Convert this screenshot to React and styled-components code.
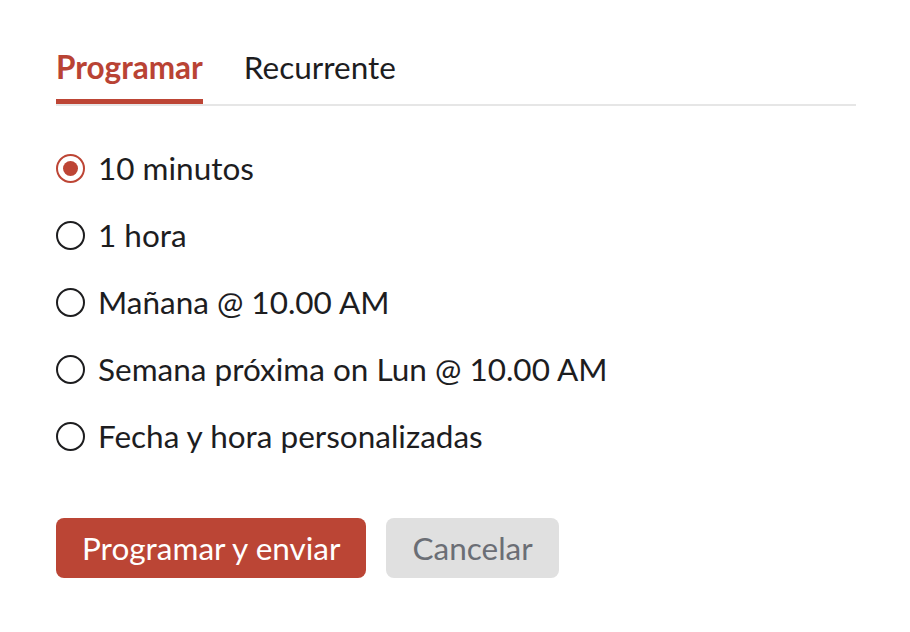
import React, { useState } from 'react';
import styled, { createGlobalStyle } from 'styled-components';

const GlobalStyle = createGlobalStyle`
  html, body {
    margin: 0;
    padding: 0;
    background: #fff;
    font-family: Lato, "Open Sans", sans-serif;
    color: #1d1d1f;
  }
`;

const Panel = styled.div`
  width: 800px;
  padding: 44px 54px 0 56px;
`;

const Tabs = styled.div`
  display: flex;
  gap: 41px;
  border-bottom: 2px solid #e6e6e6;
`;

const Tab = styled.button`
  position: relative;
  background: none;
  border: none;
  padding: 6px 0 20px;
  font-family: inherit;
  font-size: 31.5px;
  line-height: 34px;
  font-weight: ${p => (p.$active ? 700 : 400)};
  color: ${p => (p.$active ? '#b94334' : '#1d1d1f')};
  cursor: pointer;

  &::after {
    content: '';
    display: ${p => (p.$active ? 'block' : 'none')};
    position: absolute;
    left: 0;
    right: 0;
    bottom: 0;
    height: 5px;
    background: #bd4535;
  }
`;

const Options = styled.div`
  display: flex;
  flex-direction: column;
  gap: 33px;
  padding-top: 45px;
`;

const Option = styled.label`
  display: flex;
  align-items: center;
  gap: 13px;
  font-size: 31.5px;
  line-height: 34px;
  cursor: pointer;
`;

const Dot = styled.span`
  box-sizing: border-box;
  width: 29px;
  height: 29px;
  border-radius: 50%;
  border: 2px solid ${p => (p.$on ? '#bd4535' : '#1d1d1f')};
  display: flex;
  align-items: center;
  justify-content: center;

  &::after {
    content: '';
    display: ${p => (p.$on ? 'block' : 'none')};
    width: 15px;
    height: 15px;
    border-radius: 50%;
    background: #bd4535;
  }
`;

const Actions = styled.div`
  display: flex;
  gap: 20px;
  padding-top: 65px;
`;

const Button = styled.button`
  height: 60px;
  padding: 0 26px;
  border: none;
  border-radius: 8px;
  font-family: inherit;
  font-size: 31.5px;
  background: ${p => (p.$primary ? '#bb4535' : '#e0e0e0')};
  color: ${p => (p.$primary ? '#fff' : '#6b6e75')};
  cursor: pointer;
`;

const options = [
  '10 minutos',
  '1 hora',
  'Mañana @ 10.00 AM',
  'Semana próxima on Lun @ 10.00 AM',
  'Fecha y hora personalizadas',
];

export default function App() {
  const [tab, setTab] = useState(0);
  const [sel, setSel] = useState(0);
  return (
    <>
      <GlobalStyle />
      <Panel>
        <Tabs>
          <Tab $active={tab === 0} onClick={() => setTab(0)}>Programar</Tab>
          <Tab $active={tab === 1} onClick={() => setTab(1)}>Recurrente</Tab>
        </Tabs>
        <Options>
          {options.map((o, i) => (
            <Option key={o} onClick={() => setSel(i)}>
              <Dot $on={sel === i} />
              {o}
            </Option>
          ))}
        </Options>
        <Actions>
          <Button $primary>Programar y enviar</Button>
          <Button>Cancelar</Button>
        </Actions>
      </Panel>
    </>
  );
}
